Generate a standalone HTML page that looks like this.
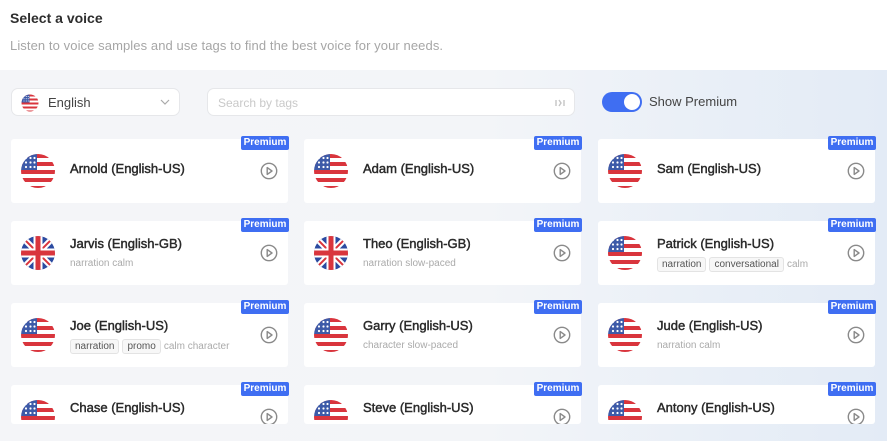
<!DOCTYPE html>
<html><head><meta charset="utf-8"><style>
*{margin:0;padding:0;box-sizing:border-box}
body{width:887px;height:441px;overflow:hidden;font-family:"Liberation Sans",sans-serif;background:#fff;position:relative}
.top{position:absolute;left:0;top:0;width:887px;height:70px;background:#fff}
.bg{position:absolute;left:0;top:70px;width:887px;height:371px;background:linear-gradient(90deg,#f4f5f8 0%,#f3f5f8 55%,#e9eff7 80%,#e3ebf6 100%)}
h1{position:absolute;left:10px;top:10px;font-size:14px;font-weight:bold;color:#2e2e2e}
.sub{position:absolute;left:10px;top:38px;font-size:13px;letter-spacing:0.09px;color:#a6a6a6}
.dd{position:absolute;left:11px;top:88px;width:169px;height:28px;background:#fff;border:1px solid #e6e7ea;border-radius:7px}
.dd span{position:absolute;left:36px;top:6px;font-size:13px;color:#444}
.srch{position:absolute;left:207px;top:88px;width:368px;height:28px;background:#fff;border:1px solid #e6e7ea;border-radius:7px}
.srch span{position:absolute;left:10px;top:7px;font-size:12px;color:#c9c9c9}
.tog{position:absolute;left:602px;top:92px;width:40px;height:20px;background:#3f6ef2;border-radius:10px}
.tog i{position:absolute;right:2px;top:2px;width:16px;height:16px;border-radius:50%;background:#fff}
.tl{position:absolute;left:649px;top:94px;font-size:13px;color:#444}
.card{position:absolute;width:277px;height:64px;background:#fff;border-radius:3px}
.badge{position:absolute;right:-1px;top:-3px;width:48px;height:14px;background:#3f6ef2;color:#fff;font-size:10px;font-weight:bold;text-align:center;line-height:14px;border-radius:2px}
.flag{position:absolute;left:9px;top:14px;width:36px;height:36px}
.nm{position:absolute;left:59px;top:22px;font-size:13px;color:#2a2a2a;-webkit-text-stroke:0.45px #2a2a2a}
.nm.t{top:15px}
.tags{position:absolute;left:59px;top:36px;font-size:10px;color:#aaa;white-space:nowrap}
.tag{display:inline-block;border:1px solid #e3e3e3;background:#f7f7f7;border-radius:3px;padding:1px 4px;color:#555;margin-right:3px}
.play{position:absolute;right:10px;top:23px;width:18px;height:18px}
</style></head><body>
<svg width="0" height="0" style="position:absolute">
<defs>
<clipPath id="cc"><circle cx="18" cy="18" r="17"/></clipPath>
<symbol id="us" viewBox="0 0 36 36"><g clip-path="url(#cc)"><rect width="36" height="36" fill="#fff"/>
<rect y="1" width="36" height="4" fill="#d9353d"/><rect y="9" width="36" height="4" fill="#d9353d"/><rect y="17" width="36" height="4" fill="#d9353d"/><rect y="25" width="36" height="4" fill="#d9353d"/><rect y="33" width="36" height="4" fill="#d9353d"/>
<rect width="17" height="17" fill="#3d5aa8"/>
<g fill="#fff"><circle cx="6" cy="5" r="1.1"/><circle cx="10.5" cy="5" r="1.1"/><circle cx="14.5" cy="5" r="1.1"/><circle cx="6" cy="9.5" r="1.1"/><circle cx="10.5" cy="9.5" r="1.1"/><circle cx="14.5" cy="9.5" r="1.1"/><circle cx="6" cy="14" r="1.1"/><circle cx="10.5" cy="14" r="1.1"/><circle cx="14.5" cy="14" r="1.1"/></g></g></symbol>
<symbol id="gb" viewBox="0 0 36 36"><g clip-path="url(#cc)"><rect width="36" height="36" fill="#2b4aa0"/>
<path d="M0 0L36 36M36 0L0 36" stroke="#fff" stroke-width="6"/><path d="M0 0L36 36M36 0L0 36" stroke="#d9353d" stroke-width="2"/>
<path d="M18 0V36M0 18H36" stroke="#fff" stroke-width="9"/><path d="M18 0V36M0 18H36" stroke="#d9353d" stroke-width="5"/></g></symbol>
<symbol id="pl" viewBox="0 0 18 18"><circle cx="9" cy="9" r="7.7" fill="none" stroke="#8a8a8a" stroke-width="1.4"/><path d="M7.2 5.6L12 9L7.2 12.4Z" fill="none" stroke="#8a8a8a" stroke-width="1.4" stroke-linejoin="round"/></symbol>
</defs></svg>
<div class="top"></div><div class="bg"></div>
<h1>Select a voice</h1>
<div class="sub">Listen to voice samples and use tags to find the best voice for your needs.</div>
<div class="dd"><svg style="position:absolute;left:9px;top:5px" width="18" height="18"><use href="#us"/></svg><span>English</span>
<svg style="position:absolute;left:148px;top:9px" width="10" height="8"><path d="M1 2L5 6L9 2" fill="none" stroke="#aaa" stroke-width="1.2"/></svg></div>
<div class="srch"><span>Search by tags</span><svg style="position:absolute;left:347px;top:9px" width="10" height="10"><path d="M1 2V8M4 2L6 5L4 8M9 2V8" fill="none" stroke="#c5c5c5" stroke-width="1.4"/></svg></div>
<div class="tog"><i></i></div><div class="tl">Show Premium</div>

<div class="card" style="left:11px;top:139px"><div class="badge">Premium</div><svg class="flag"><use href="#us"/></svg><div class="nm">Arnold (English-US)</div><svg class="play"><use href="#pl"/></svg></div>
<div class="card" style="left:304px;top:139px"><div class="badge">Premium</div><svg class="flag"><use href="#us"/></svg><div class="nm">Adam (English-US)</div><svg class="play"><use href="#pl"/></svg></div>
<div class="card" style="left:598px;top:139px"><div class="badge">Premium</div><svg class="flag"><use href="#us"/></svg><div class="nm">Sam (English-US)</div><svg class="play"><use href="#pl"/></svg></div>

<div class="card" style="left:11px;top:221px"><div class="badge">Premium</div><svg class="flag"><use href="#gb"/></svg><div class="nm t">Jarvis (English-GB)</div><div class="tags" style="top:37px">narration calm</div><svg class="play"><use href="#pl"/></svg></div>
<div class="card" style="left:304px;top:221px"><div class="badge">Premium</div><svg class="flag"><use href="#gb"/></svg><div class="nm t">Theo (English-GB)</div><div class="tags" style="top:37px">narration slow-paced</div><svg class="play"><use href="#pl"/></svg></div>
<div class="card" style="left:598px;top:221px"><div class="badge">Premium</div><svg class="flag"><use href="#us"/></svg><div class="nm t">Patrick (English-US)</div><div class="tags"><span class="tag">narration</span><span class="tag">conversational</span>calm</div><svg class="play"><use href="#pl"/></svg></div>

<div class="card" style="left:11px;top:303px"><div class="badge">Premium</div><svg class="flag"><use href="#us"/></svg><div class="nm t">Joe (English-US)</div><div class="tags"><span class="tag">narration</span><span class="tag">promo</span>calm character</div><svg class="play"><use href="#pl"/></svg></div>
<div class="card" style="left:304px;top:303px"><div class="badge">Premium</div><svg class="flag"><use href="#us"/></svg><div class="nm t">Garry (English-US)</div><div class="tags" style="top:37px">character slow-paced</div><svg class="play"><use href="#pl"/></svg></div>
<div class="card" style="left:598px;top:303px"><div class="badge">Premium</div><svg class="flag"><use href="#us"/></svg><div class="nm t">Jude (English-US)</div><div class="tags" style="top:37px">narration calm</div><svg class="play"><use href="#pl"/></svg></div>

<div class="card" style="left:11px;top:385px;height:39px;overflow:visible"><div class="badge">Premium</div><div style="position:absolute;left:0;top:0;width:277px;height:39px;overflow:hidden"><svg class="flag"><use href="#us"/></svg><svg class="play"><use href="#pl"/></svg></div><div class="nm t">Chase (English-US)</div></div>
<div class="card" style="left:304px;top:385px;height:39px;overflow:visible"><div class="badge">Premium</div><div style="position:absolute;left:0;top:0;width:277px;height:39px;overflow:hidden"><svg class="flag"><use href="#us"/></svg><svg class="play"><use href="#pl"/></svg></div><div class="nm t">Steve (English-US)</div></div>
<div class="card" style="left:598px;top:385px;height:39px;overflow:visible"><div class="badge">Premium</div><div style="position:absolute;left:0;top:0;width:277px;height:39px;overflow:hidden"><svg class="flag"><use href="#us"/></svg><svg class="play"><use href="#pl"/></svg></div><div class="nm t">Antony (English-US)</div></div>
</body></html>
